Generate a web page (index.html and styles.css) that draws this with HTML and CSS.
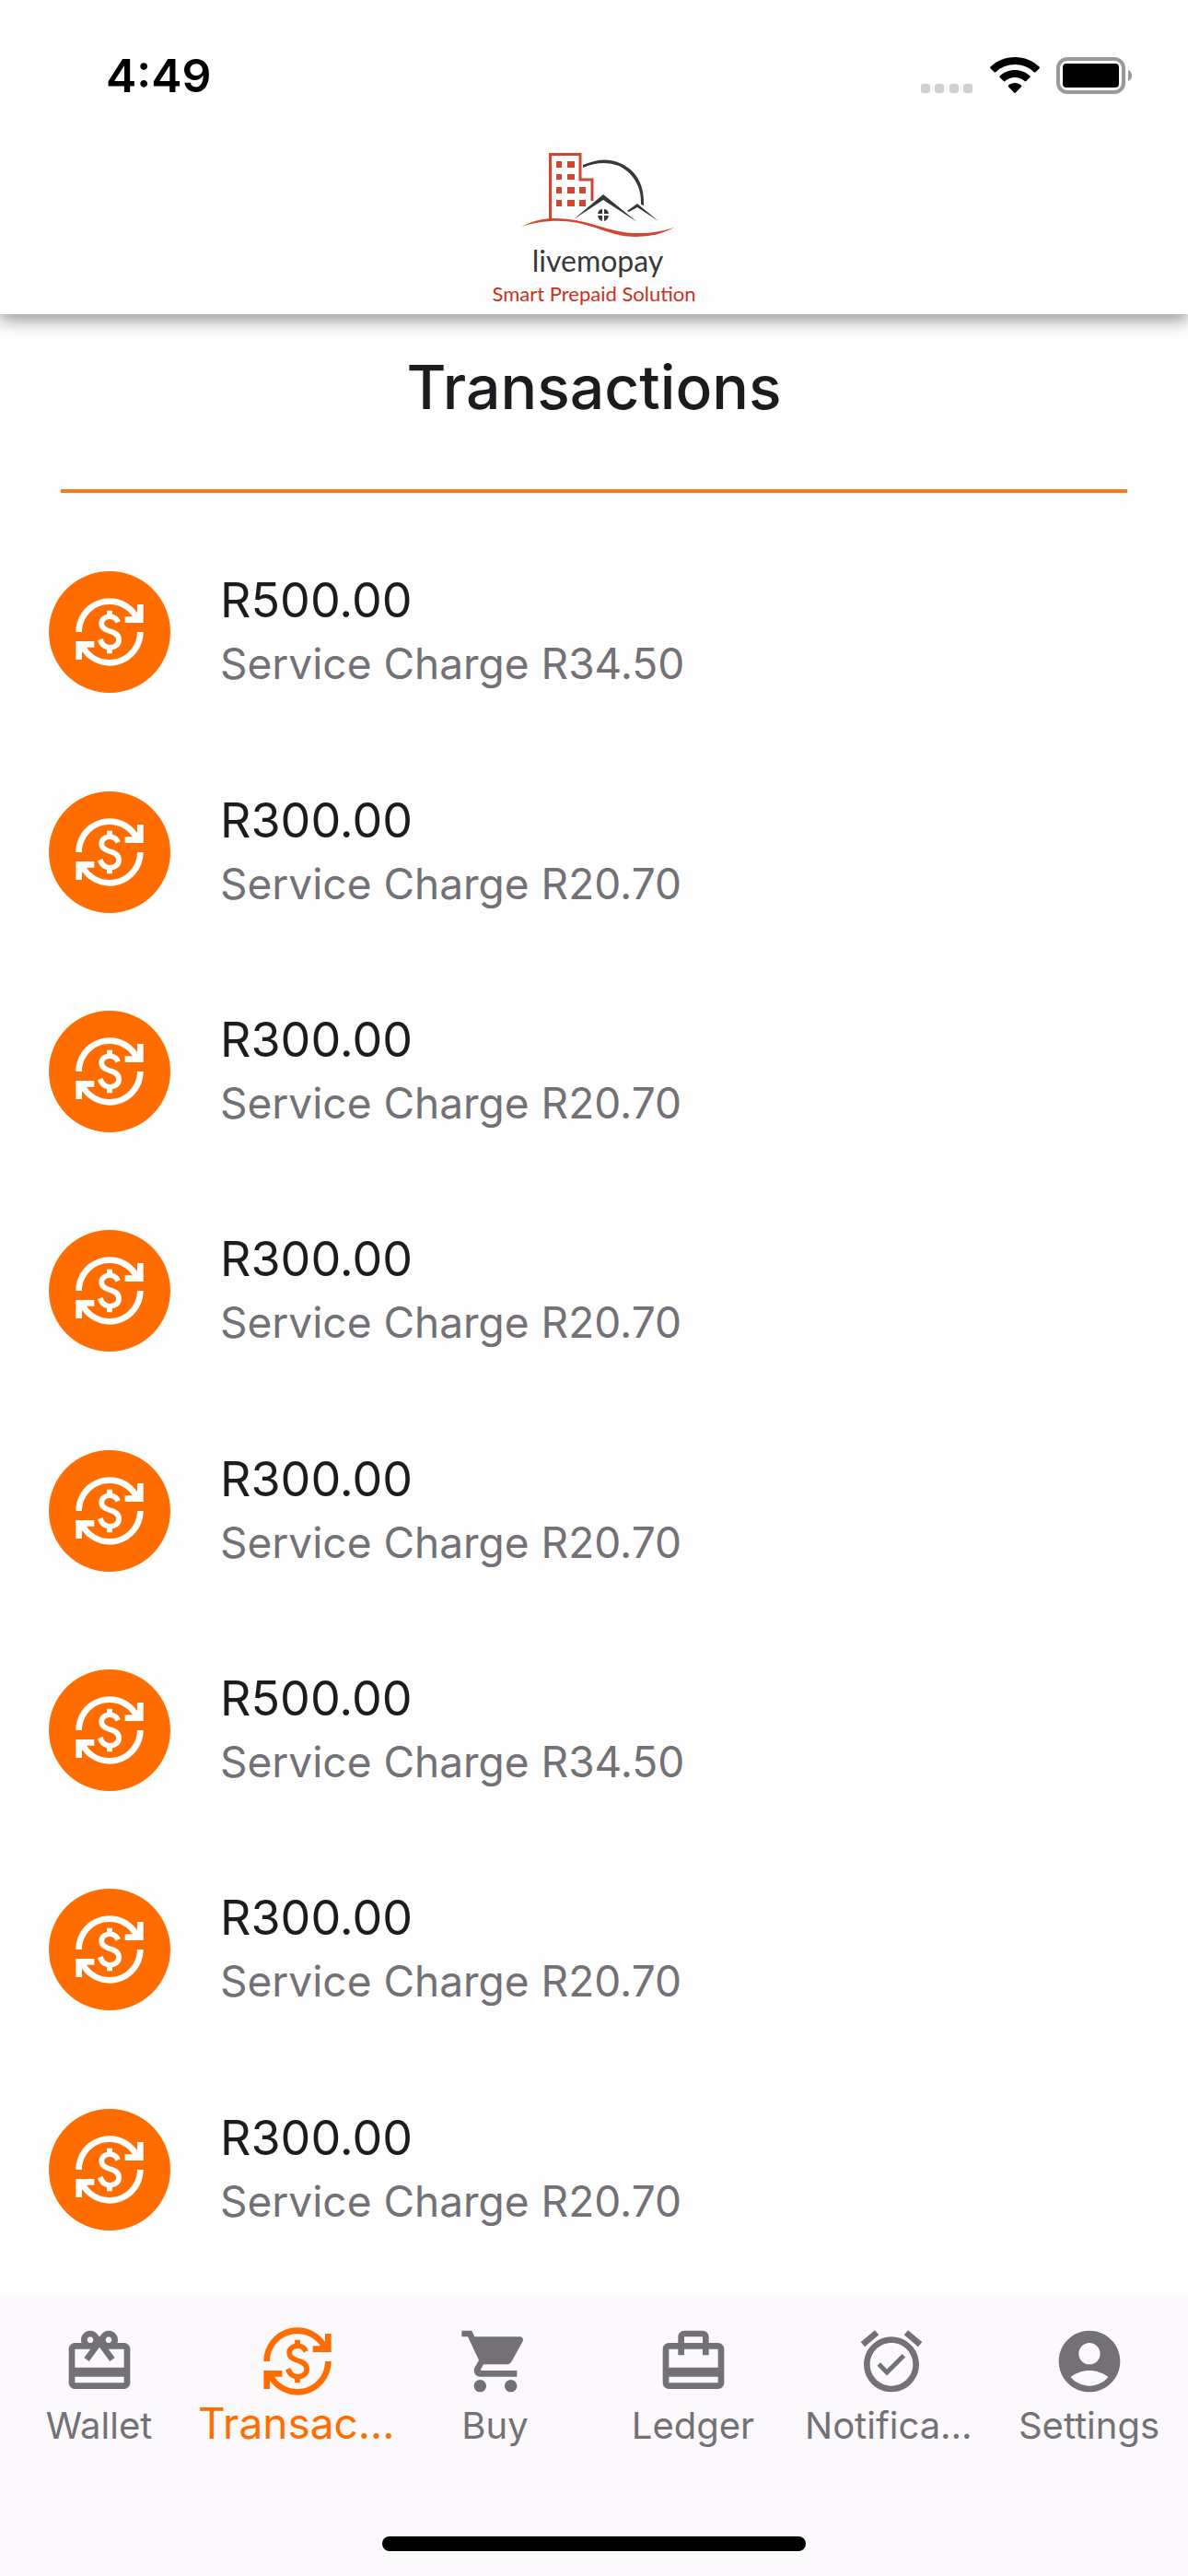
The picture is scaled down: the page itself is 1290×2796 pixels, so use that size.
FILE: index.html
```html
<!DOCTYPE html>
<html lang="en">
<head>
    <meta charset="UTF-8">
    <meta name="viewport" content="width=device-width, initial-scale=1.0">
    <title>Transactions</title>
    <link rel="stylesheet" href="styles.css">
</head>
<body>
    <svg class="icon-defs" aria-hidden="true">
        <symbol id="icon-exchange" viewBox="0 0 24 24">
            <path d="M12.89 11.1c-1.78-.59-2.64-.96-2.64-1.9 0-1.02 1.11-1.39 1.81-1.39 1.31 0 1.79.99 1.9 1.34l1.58-.67c-.15-.44-.82-1.91-2.66-2.23V5h-1.75v1.26c-2.6.56-2.62 2.85-2.62 2.96 0 2.27 2.25 2.91 3.35 3.31 1.58.56 2.28 1.07 2.28 2.03 0 1.13-1.05 1.61-1.98 1.61-1.82 0-2.34-1.87-2.4-2.09L8.1 14.75c.63 2.19 2.28 2.78 3.02 2.96V19h1.75v-1.24c.52-.09 3.02-.59 3.02-3.22.01-1.39-.6-2.61-3-3.44zM3 21H1v-6h6v2H4.52c1.61 2.41 4.36 4 7.48 4 4.97 0 9-4.03 9-9h2c0 6.08-4.92 11-11 11-3.72 0-7.01-1.85-9-4.67V21zM1 12C1 5.92 5.92 1 12 1c3.72 0 7.01 1.85 9 4.67V3h2v6h-6V7h2.48C17.87 4.59 15.12 3 12 3c-4.97 0-9 4.03-9 9H1z"/>
        </symbol>
    </svg>

    <header class="app-header">
        <div class="status-bar">
            <span class="status-time">4:49</span>
            <div class="status-icons">
                <svg class="status-signal" viewBox="0 0 57 10" aria-hidden="true">
                    <rect width="10" height="10" rx="3"/>
                    <rect x="15" width="10" height="10" rx="3"/>
                    <rect x="31" width="10" height="10" rx="3"/>
                    <rect x="46" width="10" height="10" rx="3"/>
                </svg>
                <svg class="status-wifi" viewBox="0 0 54 40" aria-hidden="true">
                    <path d="M27 0C17 0 7.500 4 .5 10.500q-.8.9 0 1.700l4 4q.9.8 1.800 0A30 30 0 0 1 47.700 16.200q.9.8 1.800 0l4-4q.8-.8 0-1.700C46.500 4 37 0 27 0z"/>
                    <path d="M27 14c-6.200 0-12 2.400-16.300 6.300q-.9.900 0 1.800l4 4q.9.800 1.800 0a15.800 15.800 0 0 1 21 0q.9.800 1.800 0l4-4q.9-.9 0-1.800C39 16.400 33.200 14 27 14z"/>
                    <path d="M27 28c-2.600 0-5 .9-6.900 2.500q-1 .9 0 1.800l6 6.300q.9.800 1.800 0l6-6.300q1-.9 0-1.800C32 28.900 29.600 28 27 28z"/>
                </svg>
                <svg class="status-battery" viewBox="0 0 83 40" aria-hidden="true">
                    <rect class="battery-frame" x="2" y="2" width="71" height="36" rx="10"/>
                    <rect x="7" y="7" width="61" height="26" rx="4"/>
                    <path class="battery-cap" d="M78 14q4 1.500 4 6t-4 6z"/>
                </svg>
            </div>
        </div>

        <div class="logo">
            <svg class="logo-mark" viewBox="0 0 166 92" aria-hidden="true">
                <g class="logo-red">
                    <path class="logo-outline" d="M31.500 73V1.500H64V29h13v23"/>
                    <path d="M38 9h6v7h-6zM50 9h8v7h-8zM38 23h6v6h-6zM50 23h8v6h-8zM38 37h6v7h-6zM50 37h8v7h-8zM63 37h7v7h-7zM38 51h6v7h-6zM50 51h8v7h-8zM63 51h7v7h-7z"/>
                    <path d="M0 80Q15 72 32 71C75 70 92 88 130 87Q147 87 166 81Q147 91 125 91C90 91 76 72 32 74Q15 75 0 80z"/>
                </g>
                <g class="logo-dark">
                    <path d="M67 13Q90 3 107 11C126 19 134 36 133 57L130 56C131 40 124 23 106 14Q88 7 67 16z"/>
                    <path d="M57 72L89 45L126 75L89 51z"/>
                    <path d="M115 63L126 55L149 74L126 59L117 64z"/>
                    <path d="M83 66q1-5 5-5v5zM90 61q4 0 5 5h-5zM83 68h5v6q-4-1-5-6zM90 68h5q-1 5-5 6z"/>
                </g>
            </svg>
            <span class="logo-name">livemopay</span>
            <span class="logo-tagline">Smart Prepaid Solution</span>
        </div>
    </header>

    <main class="content">
        <h1 class="page-title">Transactions</h1>

        <ul class="transaction-list">
            <li class="transaction">
                <span class="avatar"><svg class="icon"><use href="#icon-exchange"/></svg></span>
                <div class="transaction-text">
                    <div class="amount">R500.00</div>
                    <div class="charge">Service Charge R34.50</div>
                </div>
            </li>
            <li class="transaction">
                <span class="avatar"><svg class="icon"><use href="#icon-exchange"/></svg></span>
                <div class="transaction-text">
                    <div class="amount">R300.00</div>
                    <div class="charge">Service Charge R20.70</div>
                </div>
            </li>
            <li class="transaction">
                <span class="avatar"><svg class="icon"><use href="#icon-exchange"/></svg></span>
                <div class="transaction-text">
                    <div class="amount">R300.00</div>
                    <div class="charge">Service Charge R20.70</div>
                </div>
            </li>
            <li class="transaction">
                <span class="avatar"><svg class="icon"><use href="#icon-exchange"/></svg></span>
                <div class="transaction-text">
                    <div class="amount">R300.00</div>
                    <div class="charge">Service Charge R20.70</div>
                </div>
            </li>
            <li class="transaction">
                <span class="avatar"><svg class="icon"><use href="#icon-exchange"/></svg></span>
                <div class="transaction-text">
                    <div class="amount">R300.00</div>
                    <div class="charge">Service Charge R20.70</div>
                </div>
            </li>
            <li class="transaction">
                <span class="avatar"><svg class="icon"><use href="#icon-exchange"/></svg></span>
                <div class="transaction-text">
                    <div class="amount">R500.00</div>
                    <div class="charge">Service Charge R34.50</div>
                </div>
            </li>
            <li class="transaction">
                <span class="avatar"><svg class="icon"><use href="#icon-exchange"/></svg></span>
                <div class="transaction-text">
                    <div class="amount">R300.00</div>
                    <div class="charge">Service Charge R20.70</div>
                </div>
            </li>
            <li class="transaction">
                <span class="avatar"><svg class="icon"><use href="#icon-exchange"/></svg></span>
                <div class="transaction-text">
                    <div class="amount">R300.00</div>
                    <div class="charge">Service Charge R20.70</div>
                </div>
            </li>
        </ul>
    </main>

    <footer class="bottom-bar">
        <nav class="tabs">
            <a class="tab" href="#wallet">
                <svg class="icon" viewBox="0 0 24 24"><path d="M20 6h-2.180c.11-.31.18-.65.18-1 0-1.660-1.340-3-3-3-1.050 0-1.960.54-2.500 1.350l-.5.67-.5-.68C10.960 2.540 10.050 2 9 2 7.340 2 6 3.340 6 5c0 .35.07.69.18 1H4c-1.110 0-1.990.89-1.990 2L2 19c0 1.110.89 2 2 2h16c1.110 0 2-.89 2-2V8c0-1.110-.89-2-2-2zm-5-2c.55 0 1 .45 1 1s-.45 1-1 1-1-.45-1-1 .45-1 1-1zM9 4c.55 0 1 .45 1 1s-.45 1-1 1-1-.45-1-1 .45-1 1-1zm11 15H4v-2h16v2zm0-5H4V8h5.080L7 10.830 8.620 12 11 8.760l1-1.360 1 1.360L15.380 12 17 10.830 14.920 8H20v6z"/></svg>
                <span class="tab-label">Wallet</span>
            </a>
            <a class="tab active" href="#transactions" aria-current="page">
                <svg class="icon"><use href="#icon-exchange"/></svg>
                <span class="tab-label">Transactions</span>
            </a>
            <a class="tab" href="#buy">
                <svg class="icon" viewBox="0 0 24 24"><path d="M7 18c-1.100 0-1.990.9-1.990 2S5.900 22 7 22s2-.9 2-2-.9-2-2-2zM1 2v2h2l3.600 7.590-1.350 2.450c-.16.28-.25.61-.25.96 0 1.100.9 2 2 2h12v-2H7.420c-.14 0-.25-.11-.25-.25l.03-.12.9-1.630h7.450c.75 0 1.410-.41 1.750-1.030l3.580-6.490c.08-.14.12-.31.12-.48 0-.55-.45-1-1-1H5.210l-.94-2H1zm16 16c-1.100 0-1.990.9-1.990 2s.89 2 1.990 2 2-.9 2-2-.9-2-2-2z"/></svg>
                <span class="tab-label">Buy</span>
            </a>
            <a class="tab" href="#ledger">
                <svg class="icon" viewBox="0 0 24 24"><path d="M20 6h-3V4c0-1.110-.89-2-2-2H9c-1.110 0-2 .89-2 2v2H4c-1.110 0-2 .89-2 2v11c0 1.110.89 2 2 2h16c1.110 0 2-.89 2-2V8c0-1.110-.89-2-2-2zM9 4h6v2H9V4zm11 15H4v-2h16v2zm0-5H4V8h3v2h2V8h6v2h2V8h3v6z"/></svg>
                <span class="tab-label">Ledger</span>
            </a>
            <a class="tab" href="#notifications">
                <svg class="icon" viewBox="0 0 24 24"><path d="M22 5.720l-4.600-3.860-1.290 1.530 4.600 3.860L22 5.720zM7.880 3.390L6.600 1.860 2 5.710l1.290 1.530 4.590-3.850zM12 4c-4.970 0-9 4.030-9 9s4.020 9 9 9c4.970 0 9-4.030 9-9s-4.030-9-9-9zm0 16c-3.870 0-7-3.130-7-7s3.130-7 7-7 7 3.130 7 7-3.130 7-7 7zm-1.460-5.470L8.410 12.400l-1.060 1.060 3.180 3.180 6-6-1.060-1.060-4.930 4.950z"/></svg>
                <span class="tab-label">Notifications</span>
            </a>
            <a class="tab" href="#settings">
                <svg class="icon" viewBox="0 0 24 24"><path d="M12 2C6.480 2 2 6.480 2 12s4.480 10 10 10 10-4.480 10-10S17.520 2 12 2zm0 4c1.930 0 3.500 1.570 3.500 3.500S13.930 13 12 13s-3.500-1.570-3.500-3.500S10.070 6 12 6zm0 14c-2.030 0-4.430-.82-6.140-2.880C7.550 15.800 9.680 15 12 15s4.450.8 6.140 2.120C16.430 19.180 14.030 20 12 20z"/></svg>
                <span class="tab-label">Settings</span>
            </a>
        </nav>
        <div class="home-indicator"></div>
    </footer>
</body>
</html>
```

FILE: styles.css
```css
* {
    box-sizing: border-box;
}
body {
    margin: 0;
    min-height: 100vh;
    display: flex;
    flex-direction: column;
    background-color: #fefefe;
    color: #1c1b1f;
    font-family: Inter, Roboto, sans-serif;
}
.icon-defs {
    display: none;
}
.icon {
    width: 80px;
    height: 80px;
    flex-shrink: 0;
    fill: currentColor;
}

/* Header */
.app-header {
    box-shadow: 0 8px 16px rgba(0, 0, 0, 0.36);
}
.status-bar {
    display: flex;
    justify-content: space-between;
    align-items: center;
    height: 164px;
    padding: 0 60px 0 115px;
}
.status-time {
    color: #000;
    font-size: 50px;
    font-weight: 600;
}
.status-icons {
    display: flex;
    align-items: center;
    gap: 18px;
}
.status-signal {
    width: 57px;
    height: 10px;
    margin-top: 28px;
    fill: #cfcfcf;
}
.status-wifi {
    width: 54px;
    height: 40px;
}
.status-battery {
    width: 83px;
    height: 40px;
}
.battery-frame {
    fill: none;
    stroke: #999;
    stroke-width: 4;
}
.battery-cap {
    fill: #999;
}

/* Logo */
.logo {
    display: flex;
    flex-direction: column;
    align-items: center;
    height: 177px;
    padding-top: 2px;
    font-family: Lato, sans-serif;
}
.logo-mark {
    width: 166px;
    height: 92px;
    margin-left: 8px;
}
.logo-outline {
    fill: none;
    stroke: #d2452f;
    stroke-width: 3;
}
.logo-red {
    fill: #d2452f;
}
.logo-dark {
    fill: #37383a;
}
.logo-name {
    margin-left: 8px;
    color: #37383a;
    font-size: 32px;
    line-height: 50px;
}
.logo-tagline {
    color: #c8321e;
    font-size: 22px;
    line-height: 22px;
}

/* Transactions */
.content {
    flex: 1;
    display: flex;
    flex-direction: column;
    padding-bottom: 18px;
}
.page-title {
    margin: 0 66px;
    padding: 40px 0 72px;
    border-bottom: 4px solid #f57c20;
    font-size: 66px;
    font-weight: 500;
    line-height: 78px;
    text-align: center;
}
.transaction-list {
    flex: 1;
    display: grid;
    grid-auto-rows: 1fr;
    margin: 0;
    padding: 32px 53px 0;
    list-style: none;
}
.transaction {
    display: flex;
    align-items: center;
    gap: 54px;
}
.avatar {
    display: flex;
    align-items: center;
    justify-content: center;
    width: 132px;
    height: 132px;
    border-radius: 50%;
    background-color: #ff6d00;
    color: #fff;
}
.transaction-text {
    padding-bottom: 4px;
}
.amount {
    font-size: 52px;
    line-height: 72px;
}
.charge {
    color: #737175;
    font-size: 46px;
    line-height: 64px;
}

/* Bottom navigation */
.bottom-bar {
    display: flex;
    flex-direction: column;
    align-items: center;
    justify-content: space-between;
    height: 304px;
    padding: 31px 0 27px;
    background-color: #fbf9fc;
}
.tabs {
    display: grid;
    grid-template-columns: repeat(6, 1fr);
    width: 100%;
}
.tab {
    display: flex;
    flex-direction: column;
    align-items: center;
    min-width: 0;
    padding: 0 14px;
    color: #737175;
    text-decoration: none;
}
.tab-label {
    max-width: 100%;
    overflow: hidden;
    font-size: 40px;
    line-height: 60px;
    text-overflow: ellipsis;
    white-space: nowrap;
}
.active {
    padding: 0;
    color: #ff6d00;
}
.active .tab-label {
    font-size: 46px;
    line-height: 54px;
}
.home-indicator {
    width: 460px;
    height: 16px;
    border-radius: 8px;
    background-color: #000;
}
```
